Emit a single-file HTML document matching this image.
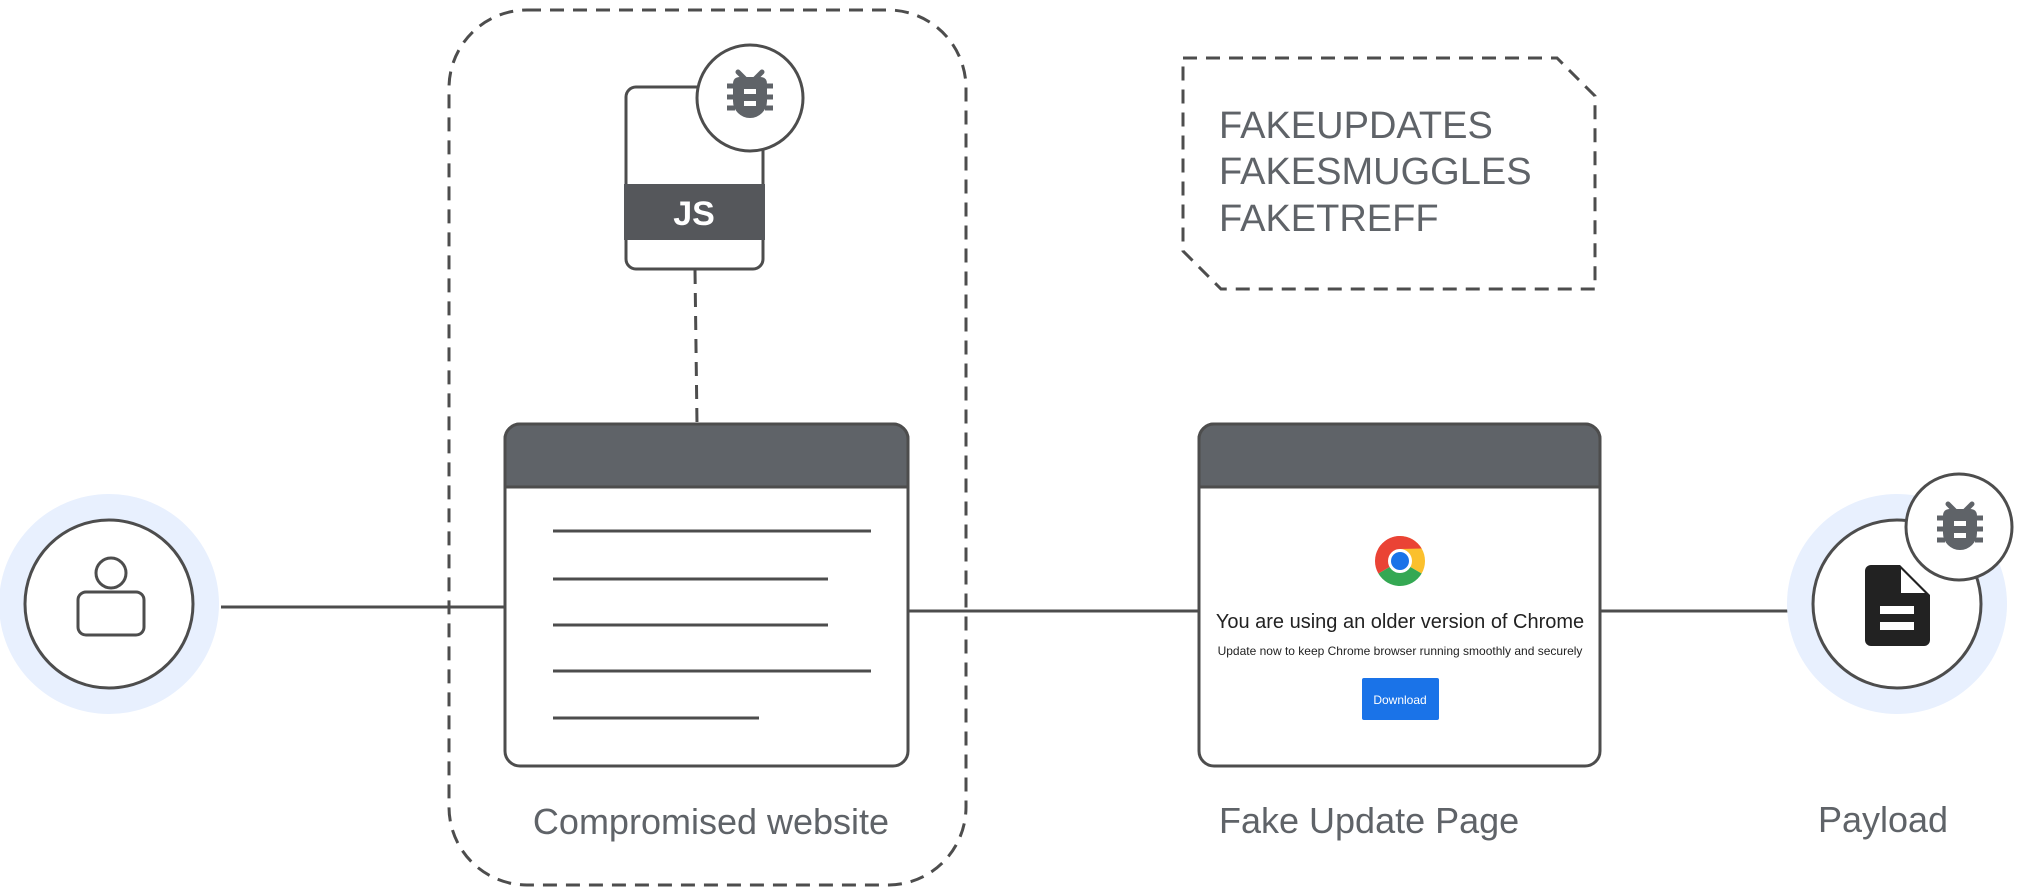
<!DOCTYPE html>
<html><head><meta charset="utf-8"><style>
html,body{margin:0;padding:0;background:#fff}
svg{display:block}
text{font-family:"Liberation Sans",Arial,sans-serif}
</style></head><body>
<svg width="2017" height="892" viewBox="0 0 2017 892" xmlns="http://www.w3.org/2000/svg">
<defs>
<g id="bug">
  <path d="M-5,-18 L-12,-25 M5,-18 L12,-25" stroke="#5f6368" stroke-width="5" stroke-linecap="round"/>
  <path d="M-17,-13 Q-17,-20 -10,-20 H10 Q17,-20 17,-13 V4 A17,17 0 0 1 -17,4 Z" fill="#5f6368"/>
  <path d="M-23,-11 h8 M15,-11 h8 M-23,0 h8 M15,0 h8 M-23,11 h8 M15,11 h8" stroke="#5f6368" stroke-width="5"/>
  <rect x="-6" y="-8" width="12" height="5" fill="#fff"/>
  <rect x="-6" y="4" width="12" height="5" fill="#fff"/>
</g>
</defs>
<g fill="none" stroke="#4d4d4d" stroke-width="3">
<rect x="449" y="10" width="517" height="875" rx="78" stroke-dasharray="14 9"/>
<line x1="221" y1="607" x2="505" y2="607"/>
<line x1="908" y1="611" x2="1199" y2="611"/>
<line x1="1600" y1="611" x2="1788" y2="611"/>
<line x1="695" y1="270" x2="697" y2="424" stroke-dasharray="14 9"/>
<path d="M1183,58 H1557 L1595,96 V289 H1221 L1183,251 Z" stroke-dasharray="14 9"/>
</g>
<circle cx="109" cy="604" r="110" fill="#e8f0fe"/>
<circle cx="109" cy="604" r="84" fill="#fff" stroke="#4d4d4d" stroke-width="3"/>
<circle cx="111" cy="573" r="15" fill="#fff" stroke="#4d4d4d" stroke-width="3"/>
<rect x="78" y="592" width="66" height="43" rx="8" fill="#fff" stroke="#4d4d4d" stroke-width="3"/>
<rect x="626" y="87" width="137" height="182" rx="10" fill="#fff" stroke="#4d4d4d" stroke-width="3"/>
<rect x="624" y="184" width="141" height="56" fill="#55575b"/>
<text x="694" y="225" font-size="34" font-weight="bold" fill="#fff" text-anchor="middle">JS</text>
<circle cx="750" cy="98" r="53" fill="#fff" stroke="#4d4d4d" stroke-width="3"/>
<use href="#bug" x="750" y="97"/>
<rect x="505" y="424" width="403" height="342" rx="15" fill="#fff" stroke="#4d4d4d" stroke-width="3"/>
<path d="M505,487 V439 a15,15 0 0 1 15,-15 H893 a15,15 0 0 1 15,15 V487 Z" fill="#5f6368" stroke="#4d4d4d" stroke-width="3"/>
<g stroke="#4d4d4d" stroke-width="3">
<line x1="553" y1="531" x2="871" y2="531"/>
<line x1="553" y1="579" x2="828" y2="579"/>
<line x1="553" y1="625" x2="828" y2="625"/>
<line x1="553" y1="671" x2="871" y2="671"/>
<line x1="553" y1="718" x2="759" y2="718"/>
</g>
<text x="711" y="834" font-size="36" fill="#5f6368" text-anchor="middle">Compromised website</text>
<rect x="1199" y="424" width="401" height="342" rx="15" fill="#fff" stroke="#4d4d4d" stroke-width="3"/>
<path d="M1199,487 V439 a15,15 0 0 1 15,-15 H1585 a15,15 0 0 1 15,15 V487 Z" fill="#5f6368" stroke="#4d4d4d" stroke-width="3"/>
<g transform="translate(1400,561)">
<path d="M0,0 L0,-25 A25,25 0 0 1 21.65,12.5 Z" fill="#fbc02d"/>
<path d="M0,0 L21.65,12.5 A25,25 0 0 1 -21.65,12.5 Z" fill="#34a853"/>
<path d="M0,0 L-21.65,12.5 A25,25 0 0 1 0,-25 Z" fill="#ea4335"/>
<path d="M0,-12 L21.65,-12.5 A25,25 0 0 0 -21.65,-12.5 Z" fill="#ea4335"/>
<circle r="12" fill="#fff"/>
<circle r="9" fill="#1a73e8"/>
</g>
<text x="1400" y="628" font-size="20" fill="#222" text-anchor="middle">You are using an older version of Chrome</text>
<text x="1400" y="655" font-size="12" fill="#222" text-anchor="middle">Update now to keep Chrome browser running smoothly and securely</text>
<rect x="1362" y="678" width="77" height="42" rx="2" fill="#1a73e8"/>
<text x="1400" y="704" font-size="12" fill="#fff" text-anchor="middle">Download</text>
<text x="1219" y="833" font-size="36" fill="#5f6368">Fake Update Page</text>
<g font-size="38" fill="#5f6368">
<text x="1219" y="138">FAKEUPDATES</text>
<text x="1219" y="184">FAKESMUGGLES</text>
<text x="1219" y="231">FAKETREFF</text>
</g>
<circle cx="1897" cy="604" r="110" fill="#e8f0fe"/>
<circle cx="1897" cy="604" r="84" fill="#fff" stroke="#4d4d4d" stroke-width="3"/>
<path d="M1871,565 H1900 L1930,595 V640 a6,6 0 0 1 -6,6 H1871 a6,6 0 0 1 -6,-6 V571 a6,6 0 0 1 6,-6 Z" fill="#222"/>
<path d="M1901,569 V593 H1925 Z" fill="#fff"/>
<rect x="1880" y="606" width="34" height="8" fill="#fff"/>
<rect x="1880" y="622" width="34" height="8" fill="#fff"/>
<circle cx="1959" cy="527" r="53" fill="#fff" stroke="#4d4d4d" stroke-width="3"/>
<use href="#bug" x="1960" y="529"/>
<text x="1883" y="832" font-size="36" fill="#5f6368" text-anchor="middle">Payload</text>
</svg>
</body></html>
